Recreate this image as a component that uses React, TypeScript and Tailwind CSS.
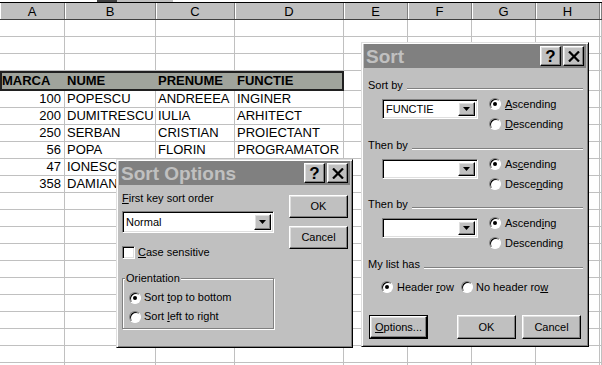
import React from 'react';

const colW = [
  'w-[65px]',
  'w-[91px]',
  'w-[79px]',
  'w-[109px]',
  'w-[64px]',
  'w-[64px]',
  'w-[64px]',
  'w-[64px]',
  'w-[2px]',
];
const letters = ['A', 'B', 'C', 'D', 'E', 'F', 'G', 'H', ''];

// last two rows sit under the Sort Options dialog, only the first columns show
const rows: [string, string, string, string][] = [
  ['100', 'POPESCU', 'ANDREEEA', 'INGINER'],
  ['200', 'DUMITRESCU', 'IULIA', 'ARHITECT'],
  ['250', 'SERBAN', 'CRISTIAN', 'PROIECTANT'],
  ['56', 'POPA', 'FLORIN', 'PROGRAMATOR'],
  ['47', 'IONESCU', '', ''],
  ['358', 'DAMIAN', '', ''],
];

const raised =
  'bg-[#c0c0c0] border border-t-white border-l-white border-r-black border-b-black shadow-[inset_-1px_-1px_0_#808080,inset_1px_1px_0_#dfdfdf]';
const sunken =
  'bg-white border border-t-[#808080] border-l-[#808080] border-r-white border-b-white shadow-[inset_1px_1px_0_#000,inset_-1px_-1px_0_#dfdfdf]';

function EmptyRow({ h = 'h-[17px]' }: { h?: string }) {
  return (
    <div className={`flex ${h}`}>
      {colW.map((w, i) => (
        <div key={i} className={`${w} h-full shrink-0 border-r border-b border-[#c0c0c0]`} />
      ))}
    </div>
  );
}

function Radio({ on }: { on?: boolean }) {
  return (
    <span className="flex h-[12px] w-[12px] shrink-0 items-center justify-center rounded-full bg-white border border-t-[#808080] border-l-[#808080] border-r-white border-b-white shadow-[inset_1px_1px_0_#000]">
      {on && <span className="h-[4px] w-[4px] rounded-full bg-black" />}
    </span>
  );
}

function Arrow() {
  return (
    <div className={`flex h-full w-[17px] shrink-0 items-center justify-center ${raised}`}>
      <svg width="7" height="4" viewBox="0 0 7 4">
        <path d="M0 0h7L3.5 4z" fill="#000" />
      </svg>
    </div>
  );
}

function TitleBar({ title }: { title: string }) {
  return (
    <div className="flex h-[24px] items-center justify-between bg-[#808080] pl-[2px] pr-[2px]">
      <span className="text-[19px] font-bold leading-none text-[#c0c0c0]">{title}</span>
      <div className="flex gap-[2px]">
        <div className={`flex h-[20px] w-[21px] items-center justify-center ${raised}`}>
          <span className="text-[17px] font-bold leading-none text-black">?</span>
        </div>
        <div className={`flex h-[20px] w-[21px] items-center justify-center ${raised}`}>
          <svg width="12" height="11" viewBox="0 0 12 11">
            <path d="M1 0.5L11 10.5M11 0.5L1 10.5" stroke="#000" strokeWidth="2.2" />
          </svg>
        </div>
      </div>
    </div>
  );
}

function Label({ children, mt = '' }: { children: React.ReactNode; mt?: string }) {
  return (
    <div className={`flex h-[14px] items-center gap-[4px] pl-[4px] ${mt}`}>
      <span className="leading-none">{children}</span>
      <div className="mt-[8px] h-[2px] flex-1 border-t border-t-[#808080] border-b border-b-white" />
    </div>
  );
}

function SortKey({
  value,
  asc,
  desc,
  mb,
  mt = '',
  label,
}: {
  value: string;
  asc: React.ReactNode;
  desc: React.ReactNode;
  mb: string;
  mt?: string;
  label: string;
}) {
  return (
    <div className={`flex flex-col ${mb}`}>
      <Label mt={mt}>{label}</Label>
      <div className="mt-[2px] flex h-[40px]">
        <div className={`ml-[18px] mt-[5px] flex h-[20px] w-[96px] items-center p-[2px] ${sunken}`}>
          <span className="flex-1 pl-[1px] leading-none">{value}</span>
          <Arrow />
        </div>
        <div className="ml-[11px] flex flex-col">
          <div className="flex h-[20px] items-center gap-[4px]">
            <Radio on />
            <span className="leading-none">{asc}</span>
          </div>
          <div className="flex h-[20px] items-center gap-[4px]">
            <Radio />
            <span className="leading-none">{desc}</span>
          </div>
        </div>
      </div>
    </div>
  );
}

function SortDialog() {
  return (
    <div className="absolute left-[361px] top-[42px] flex h-[305px] w-[228px] flex-col bg-[#c0c0c0] border border-t-[#dfdfdf] border-l-[#dfdfdf] border-r-black border-b-black px-[2px] pt-[1px] text-[11px] text-black shadow-[inset_1px_1px_0_#fff,inset_-1px_-1px_0_#808080]">
      <TitleBar title="Sort" />
      <div className="flex flex-col pr-[3px]">
        <SortKey
          mt="mt-[10px]"
          label="Sort by"
          value="FUNCTIE"
          mb="mb-[4px]"
          asc={<><u className="underline-offset-1">A</u>scending</>}
          desc={<><u className="underline-offset-1">D</u>escending</>}
        />
        <SortKey
          label="Then by"
          value=""
          mb="mb-[3px]"
          asc={<>As<u className="underline-offset-1">c</u>ending</>}
          desc={<>Desce<u className="underline-offset-1">n</u>ding</>}
        />
        <SortKey
          label="Then by"
          value=""
          mb="mb-[4px]"
          asc={<>Ascend<u className="underline-offset-1">i</u>ng</>}
          desc={<>Descendin<u className="underline-offset-1">g</u></>}
        />
        <Label>My list has</Label>
        <div className="ml-[17px] mt-[6px] flex h-[20px] items-center">
          <div className="flex w-[80px] items-center gap-[4px]">
            <Radio on />
            <span className="leading-none">
              Header <u className="underline-offset-1">r</u>ow
            </span>
          </div>
          <div className="flex items-center gap-[3px]">
            <Radio />
            <span className="leading-none">
              No header ro<u className="underline-offset-1">w</u>
            </span>
          </div>
        </div>
        <div className="mt-[18px] flex">
          <div className="ml-[5px] h-[24px] w-[59px] border border-black">
            <div className={`flex h-full w-full items-center justify-center ${raised}`}>
              <span className="leading-none">
                <u className="underline-offset-1">O</u>ptions...
              </span>
            </div>
          </div>
          <div className={`ml-[29px] flex h-[24px] w-[59px] items-center justify-center ${raised}`}>
            OK
          </div>
          <div className={`ml-[6px] flex h-[24px] w-[59px] items-center justify-center ${raised}`}>
            Cancel
          </div>
        </div>
      </div>
    </div>
  );
}

function SortOptionsDialog() {
  return (
    <div className="absolute left-[116px] top-[159px] flex h-[189px] w-[237px] flex-col bg-[#c0c0c0] border border-t-[#dfdfdf] border-l-[#dfdfdf] border-r-black border-b-black px-[2px] pt-[1px] text-[11px] text-black shadow-[inset_1px_1px_0_#fff,inset_-1px_-1px_0_#808080]">
      <TitleBar title="Sort Options" />
      <div className="flex pl-[3px]">
        <div className="flex w-[152px] flex-col pt-[7px]">
          <div className="h-[13px] leading-[13px]">
            <u className="underline-offset-1">F</u>irst key sort order
          </div>
          <div className={`mt-[6px] flex h-[22px] w-full items-center p-[2px] ${sunken}`}>
            <span className="flex-1 pl-[1px] leading-none">Normal</span>
            <Arrow />
          </div>
          <div className="mt-[13px] flex h-[13px] items-center gap-[3px]">
            <span className={`h-[13px] w-[13px] shrink-0 ${sunken}`} />
            <span className="leading-none">
              <u className="underline-offset-1">C</u>ase sensitive
            </span>
          </div>
          <div className="mt-[19px] flex flex-col border border-[#808080] pb-[2px] shadow-[inset_1px_1px_0_#fff,1px_1px_0_#fff]">
            <span className="-mt-[7px] ml-[2px] h-[13px] w-fit bg-[#c0c0c0] px-[1px] leading-[13px]">
              Orientation
            </span>
            <div className="mt-[3px] flex h-[19px] items-center gap-[3px] pl-[6px]">
              <Radio on />
              <span className="leading-none">
                Sort <u className="underline-offset-1">t</u>op to bottom
              </span>
            </div>
            <div className="flex h-[19px] items-center gap-[3px] pl-[6px]">
              <Radio />
              <span className="leading-none">
                Sort <u className="underline-offset-1">l</u>eft to right
              </span>
            </div>
          </div>
        </div>
        <div className="ml-[15px] flex flex-col pt-[10px]">
          <div className={`flex h-[23px] w-[59px] items-center justify-center ${raised}`}>OK</div>
          <div className={`mt-[8px] flex h-[23px] w-[59px] items-center justify-center ${raised}`}>
            Cancel
          </div>
        </div>
      </div>
    </div>
  );
}

export default function App() {
  return (
    <div className="relative h-[365px] w-[602px] overflow-hidden bg-white font-['Liberation_Sans',Arial,sans-serif] text-black">
      {/* sheet tabs strip */}
      <div className="flex h-[3px] border-b border-black">
        <div className="w-[97px]" />
        <div className="w-[20px] bg-[#404040]" />
        <div className="w-[56px] bg-[#c0c0c0]" />
      </div>

      {/* column headers */}
      <div className="flex h-[17px] border-b border-b-[#404040] bg-[#c0c0c0]">
        {colW.map((w, i) => (
          <div
            key={i}
            className={`${w} flex h-full shrink-0 items-center justify-center border-r border-r-[#808080] text-[13px] leading-none shadow-[inset_1px_0_0_#fff]`}
          >
            {letters[i]}
          </div>
        ))}
      </div>

      {/* sheet body */}
      <div className="flex flex-col text-[13px] leading-[16px]">
        <EmptyRow />
        <EmptyRow />
        <EmptyRow />

        <div className="flex h-[20px]">
          <div className="flex h-full w-[344px] shrink-0 items-center border-2 border-[#202020] bg-[#a0a49c] font-bold">
            <span className="w-[63px] shrink-0">MARCA</span>
            <span className="w-[91px] shrink-0 pl-[2px]">NUME</span>
            <span className="w-[79px] shrink-0 pl-[2px]">PRENUME</span>
            <span className="flex-1 pl-[2px]">FUNCTIE</span>
          </div>
          {colW.slice(4).map((w, i) => (
            <div key={i} className={`${w} h-full shrink-0 border-r border-b border-[#c0c0c0]`} />
          ))}
        </div>

        {rows.map((r, ri) => (
          <div key={ri} className="flex h-[17px]">
            <div className="w-[65px] h-full shrink-0 border-r border-b border-[#c0c0c0] pr-[3px] text-right">
              {r[0]}
            </div>
            <div className="w-[91px] h-full shrink-0 overflow-hidden whitespace-nowrap border-r border-b border-[#c0c0c0] pl-[2px]">
              {r[1]}
            </div>
            <div className="w-[79px] h-full shrink-0 overflow-hidden whitespace-nowrap border-r border-b border-[#c0c0c0] pl-[2px]">
              {r[2]}
            </div>
            <div className="w-[109px] h-full shrink-0 overflow-hidden whitespace-nowrap border-r border-b border-[#c0c0c0] pl-[2px]">
              {r[3]}
            </div>
            {colW.slice(4).map((w, i) => (
              <div key={i} className={`${w} h-full shrink-0 border-r border-b border-[#c0c0c0]`} />
            ))}
          </div>
        ))}

        {Array.from({ length: 11 }).map((_, i) => (
          <EmptyRow key={i} />
        ))}
      </div>

      <SortOptionsDialog />
      <SortDialog />
    </div>
  );
}
